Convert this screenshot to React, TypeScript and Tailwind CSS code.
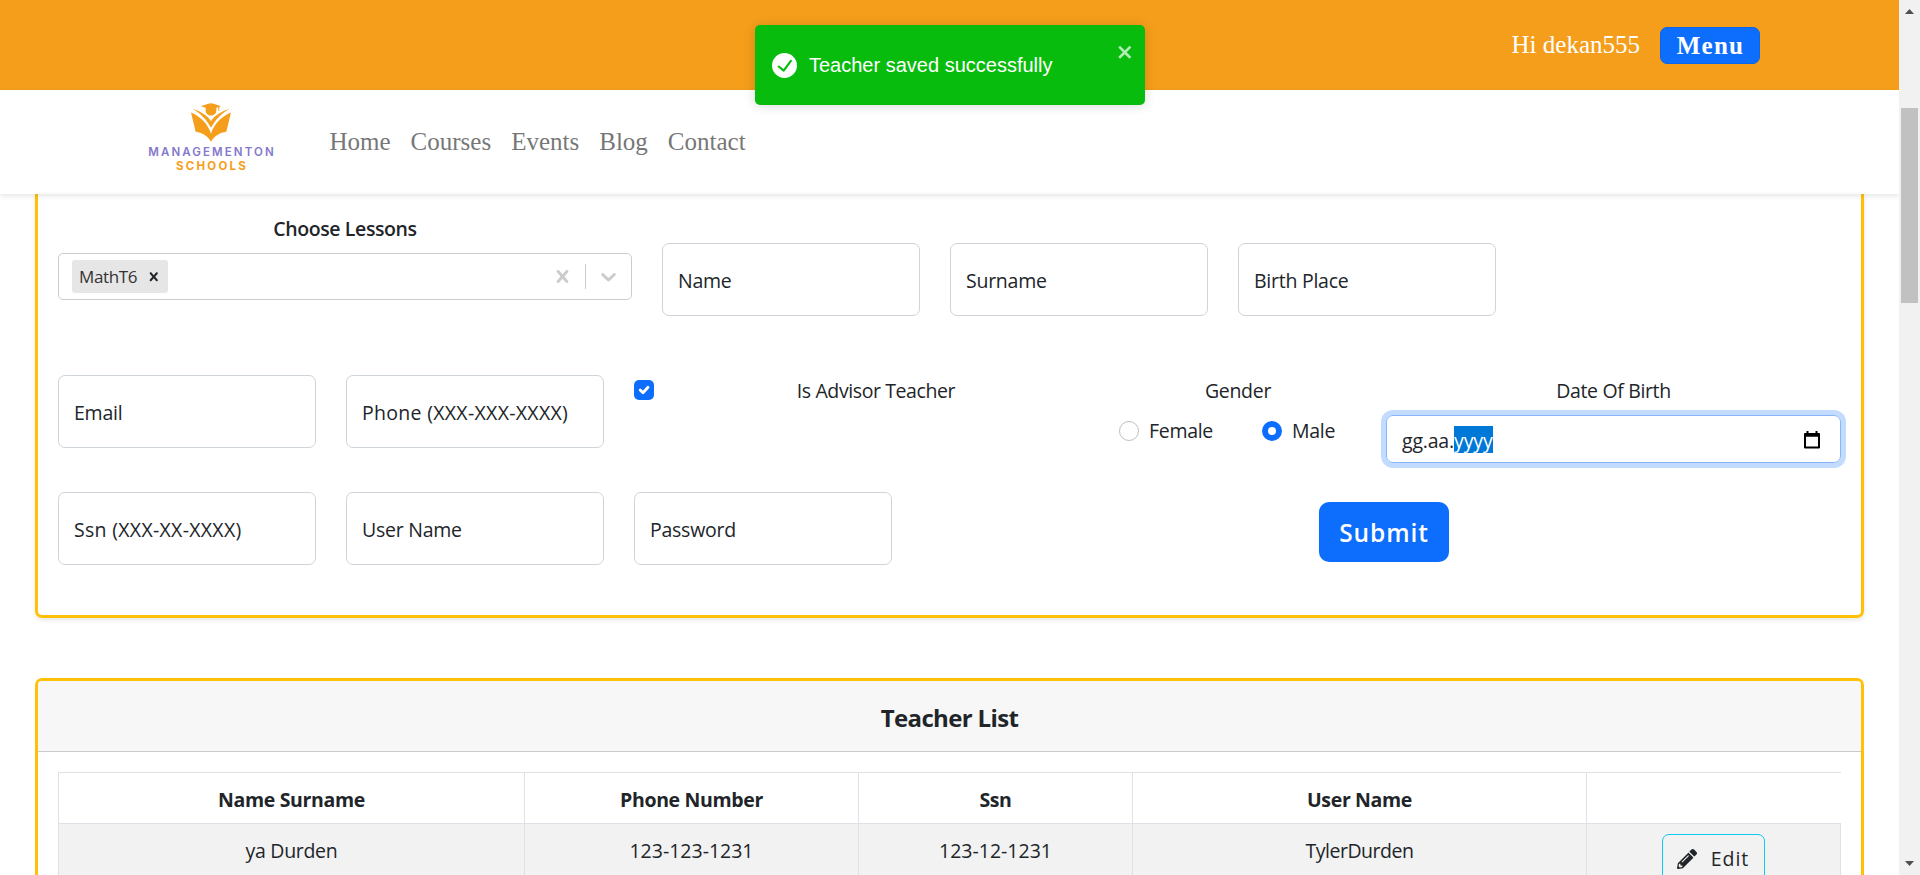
import React from "react";
import { FaPencilAlt } from "react-icons/fa";

const CROSS =
  "M14.348 14.849c-0.469 0.469-1.229 0.469-1.697 0l-2.651-3.030-2.651 3.029c-0.469 0.469-1.229 0.469-1.697 0-0.469-0.469-0.469-1.229 0-1.697l2.758-3.15-2.759-3.152c-0.469-0.469-0.469-1.228 0-1.697s1.228-0.469 1.697 0l2.652 3.031 2.651-3.031c0.469-0.469 1.228-0.469 1.697 0s0.469 1.229 0 1.697l-2.758 3.152 2.758 3.15c0.469 0.469 0.469 1.229 0 1.698z";
const CHEVRON =
  "M4.516 7.548c0.436-0.446 1.043-0.481 1.576 0l3.908 3.747 3.908-3.747c0.533-0.481 1.141-0.446 1.574 0 0.436 0.445 0.408 1.197 0 1.615-0.406 0.418-4.695 4.502-4.695 4.502-0.217 0.223-0.502 0.335-0.787 0.335s-0.57-0.112-0.789-0.335c0 0-4.287-4.084-4.695-4.502s-0.436-1.17 0-1.615z";

function Logo() {
  return (
    <div className="flex w-[128px] flex-col items-center font-['Inter',sans-serif]">
      <svg viewBox="570 66 126 122" className="h-[41px] w-[42px]" fill="#f59e1b">
        <path d="M602 78 L625 71 Q633 68 641 71 L663 78 L658 80 V92 L655 92 V81 L649 83 V91 C649 111 617 111 617 91 V83 Z" />
        <path d="M577 86 C601 93 622 106 633 123 C644 106 665 93 690 86 C664 100 645 120 633 143 C621 120 602 100 577 86 Z" />
        <path d="M573 97 C600 108 624 130 633 161 C642 130 666 108 693 97 L679 155 C660 157 642 168 633 185 C624 168 606 157 587 155 Z" />
      </svg>
      <span className="mt-[2px] mr-[-2px] text-[11.5px] leading-[14px] font-semibold tracking-[2.1px] text-[#8478cc]">MANAGEMENTON</span>
      <span className="mr-[-2px] text-[11.5px] leading-[14px] font-bold tracking-[2.2px] text-[#f59e1b]">SCHOOLS</span>
    </div>
  );
}

function Field({ label, wide = false }: { label: string; wide?: boolean }) {
  return (
    <div
      className={`flex h-[73px] w-[258px] shrink-0 items-center rounded-[7px] border border-[#ced4da] pl-[15px] pt-[3px] text-[19.5px] ${
        wide ? "tracking-[0.3px]" : "tracking-[-0.25px]"
      }`}
    >
      {label}
    </div>
  );
}

function LessonSelect() {
  return (
    <div className="flex w-[574px] flex-col">
      <div className="mt-[-29px] h-[39px] text-center text-[19.5px] leading-[30px] font-semibold tracking-[-0.4px]">Choose Lessons</div>
      <div className="flex h-[47px] items-center rounded-[5px] border border-[#cccccc] pl-[13px] pr-[10px]">
        <div className="flex h-[33px] w-[96px] items-center justify-between rounded-[3px] bg-[#e6e6e6] pr-[6px] pl-[7px] text-[17px] tracking-[-0.35px] text-[#333333]">
          <span>MathT6</span>
          <svg viewBox="0 0 20 20" className="size-[17.5px]" fill="#212529"><path d={CROSS} /></svg>
        </div>
        <svg viewBox="0 0 20 20" className="ml-auto size-[25px]" fill="#cccccc"><path d={CROSS} /></svg>
        <span className="ml-[10px] h-[25px] w-px bg-[#cccccc]" />
        <svg viewBox="0 0 20 20" className="ml-[10px] size-[25px]" fill="#cccccc"><path d={CHEVRON} /></svg>
      </div>
    </div>
  );
}

function DateField() {
  return (
    <div className="flex w-[455px] flex-col">
      <div className="text-center text-[19.5px] leading-[30px] tracking-[-0.35px]">Date Of Birth</div>
      <div className="mt-[9px] flex h-[48px] items-center rounded-[7px] border border-[#86b7fe] pl-[15px] pr-[19px] text-[19.5px] shadow-[0_0_0_5px_#c2dbfe]">
        <span className="mt-[3px] w-[52px] tracking-[-0.2px]">gg.aa.</span>
        <span className="flex h-[27px] w-[39px] items-center overflow-hidden bg-[#0078d7] pt-[3px] tracking-[-0.1px] text-white">yyyy</span>
        <svg viewBox="0 0 18 19" className="ml-auto h-[19px] w-[18px]" fill="none" stroke="#000" strokeWidth="2" strokeLinejoin="round">
          <path d="M2 4 H16 V17.5 H2 Z" />
          <path d="M2 5 H16" strokeWidth="3.5" />
          <path d="M4.5 1 V4 M13.5 1 V4" />
        </svg>
      </div>
    </div>
  );
}

function TeacherForm() {
  return (
    <section className="mx-[35px] h-[424px] shrink-0 rounded-b-[7px] border-[3px] border-t-0 border-[#ffc107] px-5 pt-[49px] shadow-[0_2px_5px_rgba(0,0,0,0.1)]">
      <div className="flex h-[132px] gap-[30px]">
        <LessonSelect />
        <Field label="Name" />
        <Field label="Surname" />
        <Field label="Birth Place" />
      </div>
      <div className="flex h-[117px]">
        <Field label="Email" />
        <div className="w-[30px]" />
        <Field label="Phone (XXX-XXX-XXXX)" wide />
        <div className="ml-[30px] mt-[5px] flex size-[20px] items-center justify-center rounded-[5px] bg-[#0d6efd]">
          <svg viewBox="0 0 20 20" className="size-[20px]" fill="none" stroke="#fff" strokeWidth="2.8" strokeLinecap="round" strokeLinejoin="round"><path d="m6.2 10 2.8 2.8 5-5.6" /></svg>
        </div>
        <div className="mt-px w-[444px] text-center text-[19.5px] leading-[30px] tracking-[-0.4px]">Is Advisor Teacher</div>
        <div className="mt-px w-[280px] text-[19.5px] tracking-[-0.3px]">
          <div className="text-center leading-[30px]">Gender</div>
          <div className="flex items-center pt-[10px] pl-[21px] leading-[30px]">
            <span className="size-[20px] rounded-full border border-[#bfbfbf]" />
            <span className="ml-[10px] w-[113px]">Female</span>
            <span className="size-[20px] rounded-full border-[6px] border-[#0d6efd]" />
            <span className="ml-[10px]">Male</span>
          </div>
        </div>
        <div className="mt-px ml-[8px]"><DateField /></div>
      </div>
      <div className="flex gap-[30px]">
        <Field label="Ssn (XXX-XX-XXXX)" wide />
        <Field label="User Name" />
        <Field label="Password" />
        <button className="mt-[10px] ml-[397px] h-[60px] w-[130px] rounded-[10px] bg-[#0d6efd] pt-[2px] text-[24.5px] font-semibold tracking-[0.9px] text-white">Submit</button>
      </div>
    </section>
  );
}

function TeacherTable() {
  const head = "border-t border-l border-[#dee2e6] h-[51px] pt-[3px] tracking-[-0.35px]";
  const cell = "border-t border-l border-[#dee2e6] bg-[#f2f2f2] pt-[12px] leading-[30px]";
  return (
    <div className="mx-5 mt-[20px] grid grid-cols-[466px_334px_274px_454px_255px] text-center text-[19.5px]">
      <div className={`${head} flex items-center justify-center font-bold`}>Name Surname</div>
      <div className={`${head} flex items-center justify-center font-bold`}>Phone Number</div>
      <div className={`${head} flex items-center justify-center font-bold`}>Ssn</div>
      <div className={`${head} flex items-center justify-center font-bold`}>User Name</div>
      <div className={head} />
      <div className={`${cell} tracking-[-0.3px]`}>ya Durden</div>
      <div className={cell}>123-123-1231</div>
      <div className={cell}>123-12-1231</div>
      <div className={`${cell} tracking-[-0.5px]`}>TylerDurden</div>
      <div className="flex h-[70px] justify-center border-x border-t border-[#dee2e6] bg-[#f2f2f2] pt-[10px]">
        <button className="mr-px flex h-[50px] w-[103px] items-center justify-center gap-[14px] rounded-[7px] border border-[#0dcaf0] tracking-[1px]">
          <FaPencilAlt className="size-[20px]" />
          <span>Edit</span>
        </button>
      </div>
    </div>
  );
}

export default function App() {
  return (
    <div className="relative flex h-[875px] w-[1920px] overflow-hidden bg-white font-['Open_Sans',sans-serif] text-[#212529]">
      <main className="flex h-[875px] w-[1899px] flex-col overflow-hidden">
        <header className="flex h-[90px] shrink-0 items-start justify-end bg-[#f59e1b] pt-[27px] pr-[139px] font-['Liberation_Serif',serif] text-[25px] text-white">
          <span className="mr-[20px] leading-[36px]">Hi dekan555</span>
          <button className="h-[37px] w-[100px] rounded-[7px] border border-[#0b66ea] bg-[#0d6efd] pl-px leading-[35px] font-bold tracking-[1.25px]">Menu</button>
        </header>
        <nav className="relative z-10 flex h-[104px] shrink-0 pt-[12px] pl-[147px] shadow-[0_2px_5px_rgba(0,0,0,0.1)]">
          <Logo />
          <div className="ml-[54.5px] flex gap-[20px] pt-[22px] font-['Liberation_Serif',serif] text-[25px] leading-[36px] text-[#777777]">
            <span>Home</span>
            <span>Courses</span>
            <span>Events</span>
            <span>Blog</span>
            <span>Contact</span>
          </div>
        </nav>
        <TeacherForm />
        <section className="mx-[35px] mt-[60px] h-[260px] shrink-0 overflow-hidden rounded-t-[7px] border-[3px] border-b-0 border-[#ffc107]">
          <h2 className="flex h-[71px] items-center justify-center border-b border-[#c9cacb] bg-[#f7f7f7] pt-[3px] text-[24px] font-bold tracking-[-0.65px]">Teacher List</h2>
          <TeacherTable />
        </section>
      </main>
      <aside className="flex h-[875px] w-[21px] flex-col items-center bg-[#f1f1f1]">
        <svg viewBox="0 0 9 5" className="mt-[9px] h-[5px] w-[9px]" fill="#505050"><path d="M4.5 0 9 5H0z" /></svg>
        <div className="mt-[94px] h-[195px] w-[17px] bg-[#c1c1c1]" />
        <svg viewBox="0 0 9 5" className="mt-auto mb-[9px] h-[5px] w-[9px]" fill="#505050"><path d="M4.5 5 9 0H0z" /></svg>
      </aside>
      <div className="absolute top-[25px] left-[755px] z-20 flex h-[80px] w-[390px] items-center rounded-[5px] bg-[#07bc0c] pl-[17px] font-['Liberation_Sans',sans-serif] text-[20px] text-white shadow-[0_1px_12px_rgba(0,0,0,0.15)]">
        <svg viewBox="0 0 24 24" className="size-[25px]" fill="#fff"><path d="M12 0a12 12 0 1012 12A12.014 12.014 0 0012 0zm6.927 8.2l-6.845 9.289a1.011 1.011 0 01-1.43.188l-4.888-3.908a1 1 0 111.25-1.562l4.076 3.261 6.227-8.451a1 1 0 111.61 1.183z" /></svg>
        <span className="ml-[12px]">Teacher saved successfully</span>
        <svg viewBox="0 0 14 16" className="absolute top-[17px] right-[10.5px] h-[20px] w-[17.5px] opacity-70" fill="#fff"><path fillRule="evenodd" d="M7.71 8.23l3.75 3.75-1.48 1.48-3.75-3.75-3.75 3.75L1 11.98l3.75-3.75L1 4.48 2.48 3l3.75 3.75L9.98 3l1.48 1.48-3.75 3.75z" /></svg>
      </div>
    </div>
  );
}
